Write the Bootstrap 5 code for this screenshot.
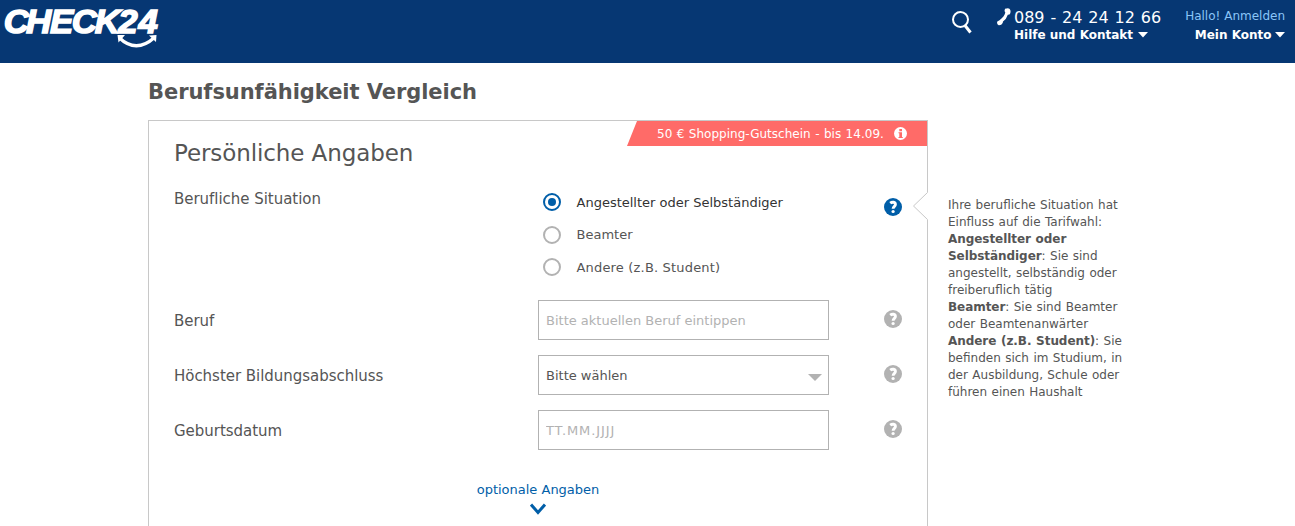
<!DOCTYPE html>
<html lang="de">
<head>
<meta charset="utf-8">
<meta name="viewport" content="width=device-width, initial-scale=1">
<title>Berufsunfähigkeit Vergleich</title>
<link href="https://cdn.jsdelivr.net/npm/bootstrap@5.3.0/dist/css/bootstrap.min.css" rel="stylesheet">
<style>
body{font-family:"DejaVu Sans",Verdana,sans-serif;font-size:13px;line-height:17px;color:#555}
a{text-decoration:none}
svg{display:block;flex:none}
.topbar{background:#063773;height:63px;padding:0 10px 0 4px;color:#fff}
.phone{font-size:16px;line-height:20px;word-spacing:.8px}
.menu-link{font-size:12px;font-weight:700;line-height:16px;color:#fff}
.hello{font-size:12px;line-height:16px;color:#8ac5f8}
.wrap{margin-left:148px;width:990px}
.page-title{font-size:21px;line-height:26px;font-weight:700;margin:0;padding:16px 0 15px;color:#555;letter-spacing:-.06px}
.panel{width:780px;height:406px;border:1px solid #c8c8c8;border-bottom:0;position:relative;padding-left:25px}
.panel-title{font-size:23px;line-height:28px;margin:0;padding-top:18px;color:#555;letter-spacing:-.1px}
.promo{position:absolute;top:0;right:0;width:300px;height:25px;background:#ff6b68;color:#fff;font-size:12px;word-spacing:.6px;letter-spacing:.02px;clip-path:polygon(10px 0,100% 0,100% 100%,0 100%);padding:0 20px 0 30px}
.notch{position:absolute;right:-1px;top:70px}
.label-col{width:364px;font-size:15px;line-height:20px;padding-top:2px;letter-spacing:-.03px}
.field-col{width:346px}
.field{width:291px;height:40px;border:1px solid #b2b2b2;border-radius:0;padding:0 7px;font-size:13px;line-height:38px;color:#555;background:#fff}
.field::placeholder{color:#b2b2b2;opacity:1}
.date-field::placeholder{letter-spacing:.9px}
.form-line{height:40px;margin-bottom:15px}
.choice{gap:15.5px;height:20px;margin-bottom:12.5px}
.more{width:728px;color:#005ea8}
.tip{margin:77px 0 0 20px;width:190px;font-size:12px;line-height:17px;word-spacing:.6px}
.tip b{letter-spacing:-.06px}
</style>
</head>
<body>
<svg width="0" height="0" class="position-absolute">
<symbol id="help" viewBox="0 0 18 18"><circle cx="9" cy="9" r="9" fill="currentColor"/><path d="M6.200 5.200C8.300 3.500 11.400 4 11.400 6.400C11.400 8.400 9.200 8.300 9.100 10.800" fill="none" stroke="#fff" stroke-width="2.900"/><circle cx="9.100" cy="13.500" r="1.600" fill="#fff"/></symbol>
</svg>
<header class="topbar d-flex justify-content-between align-items-start">
  <a href="#" aria-label="CHECK24">
    <svg width="160" height="50" viewBox="4 0 160 50">
      <g transform="scale(1.04 1)"><text x="3.500 25 48 69 91 113.800 133.300" y="33" font-family="Liberation Sans,sans-serif" font-size="33.500" font-weight="700" font-style="italic" fill="#fff" stroke="#fff" stroke-width="1.500">CHECK24</text></g>
      <path d="M119 37.500Q136 54 154.500 37.500" fill="none" stroke="#fff" stroke-width="3.200"/>
      <path d="M117.500 35h7.500l-6.500 7.500zM149 35.500l7.500-.5-.5 7z" fill="#fff"/>
    </svg>
  </a>
  <div class="d-flex">
    <svg style="margin:10px 24px 0 0" width="22" height="24" viewBox="0 0 22 24" fill="none" stroke="#fff"><circle cx="9.500" cy="9.500" r="7.500" stroke-width="2"/><path d="M14 15.500l5.500 7" stroke-width="3"/></svg>
    <svg style="margin:8px 3px 0 0" width="14" height="18" viewBox="0 0 14 18" fill="#fff"><path d="M8 .8Q12.500-1 13.300 2T12.500 6.500L10.800 6.700Q9.500 11 6 13.500L5.700 15Q4.500 17.500 1.700 17.300Q-.6 16 .3 13.500L2.500 12.200Q7.500 8.500 8.300 4.500L7.500 3Z"/></svg>
    <div class="text-nowrap" style="margin:8px 24px 0 0">
      <div class="phone">089 - 24 24 12 66</div>
      <a href="#" class="menu-link d-flex align-items-center" style="margin-top:-1px">Hilfe und Kontakt<svg class="ms-1" width="12" height="6"><path d="M1 0h10L6 5.500z" fill="#fff"/></svg></a>
    </div>
    <div class="d-flex flex-column align-items-end text-nowrap" style="margin-top:8px">
      <a href="#" class="hello">Hallo! Anmelden</a>
      <a href="#" class="menu-link d-flex align-items-center" style="margin-top:3px">Mein Konto<svg style="margin-left:3.500px" width="10" height="6"><path d="M0 0h10L5 5.500z" fill="#fff"/></svg></a>
    </div>
  </div>
</header>
<main class="wrap">
  <h1 class="page-title">Berufsunfähigkeit Vergleich</h1>
  <div class="d-flex align-items-start">
    <section class="panel">
      <div class="promo d-flex align-items-center justify-content-between text-nowrap"><span style="padding-top:1px">50 € Shopping-Gutschein - bis 14.09.</span>
        <svg width="13" height="13"><circle cx="6.500" cy="6.500" r="6.500" fill="#fff"/><path d="M5.300 2h2.700v2.200H5.300zM4.500 5.200H8V10h.8v1H4.500v-1h.8V6.200h-.8z" fill="#ff6b68"/></svg>
      </div>
      <svg class="notch" width="16" height="30"><path d="M15.500 0v30" stroke="#fff" stroke-width="1"/><path d="M15.500 0v1.500L1.500 15l14 13.500V30" fill="#fff" stroke="#c8c8c8"/></svg>
      <h2 class="panel-title">Persönliche Angaben</h2>
      <div class="d-flex" style="height:133px;padding-top:21px">
        <div class="label-col" style="padding-top:1px">Berufliche Situation</div>
        <div class="field-col" style="padding:4px 0 0 5px">
          <label class="choice d-flex align-items-center" style="color:#333"><svg width="18" height="18"><circle cx="9" cy="9" r="8" fill="none" stroke="#005ea8" stroke-width="2"/><circle cx="9" cy="9" r="4" fill="#005ea8"/></svg>Angestellter oder Selbständiger</label>
          <label class="choice d-flex align-items-center"><svg width="18" height="18"><circle cx="9" cy="9" r="8" fill="none" stroke="#b2b2b2" stroke-width="2"/></svg>Beamter</label>
          <label class="choice d-flex align-items-center" style="letter-spacing:.18px"><svg width="18" height="18"><circle cx="9" cy="9" r="8" fill="none" stroke="#b2b2b2" stroke-width="2"/></svg>Andere (z.B. Student)</label>
        </div>
        <svg width="18" height="18" style="color:#005ea8;margin-top:10px"><use href="#help"/></svg>
      </div>
      <div class="form-line d-flex align-items-center">
        <label class="label-col">Beruf</label>
        <div class="field-col"><input class="field" placeholder="Bitte aktuellen Beruf eintippen"></div>
        <svg style="margin-bottom:2px" width="18" height="18" color="#b2b2b2"><use href="#help"/></svg>
      </div>
      <div class="form-line d-flex align-items-center">
        <label class="label-col">Höchster Bildungsabschluss</label>
        <div class="field-col"><div class="field d-flex align-items-center justify-content-between" style="padding:1px 6px 0 7px">Bitte wählen<svg style="margin-top:3px" width="14" height="7"><path d="M0 0h14L7 7z" fill="#b2b2b2"/></svg></div></div>
        <svg style="margin-bottom:2px" width="18" height="18" color="#b2b2b2"><use href="#help"/></svg>
      </div>
      <div class="form-line d-flex align-items-center">
        <label class="label-col">Geburtsdatum</label>
        <div class="field-col"><input class="field date-field" placeholder="TT.MM.JJJJ"></div>
        <svg style="margin-bottom:2px" width="18" height="18" color="#b2b2b2"><use href="#help"/></svg>
      </div>
      <a href="#" class="more d-flex flex-column align-items-center" style="margin-top:31px">optionale Angaben<svg style="margin-top:5px" width="16" height="12"><path d="M1 1.500L8 9.500l7-8" fill="none" stroke="#005ea8" stroke-width="3"/></svg></a>
    </section>
    <aside class="tip text-nowrap">Ihre berufliche Situation hat<br>Einfluss auf die Tarifwahl:<br><b>Angestellter oder<br>Selbständiger</b>: Sie sind<br>angestellt, selbständig oder<br>freiberuflich tätig<br><b>Beamter</b>: Sie sind Beamter<br>oder Beamtenanwärter<br><b>Andere (z.B. Student)</b>: Sie<br>befinden sich im Studium, in<br>der Ausbildung, Schule oder<br>führen einen Haushalt</aside>
  </div>
</main>
<script src="https://cdn.jsdelivr.net/npm/bootstrap@5.3.0/dist/js/bootstrap.bundle.min.js"></script>
</body>
</html>
